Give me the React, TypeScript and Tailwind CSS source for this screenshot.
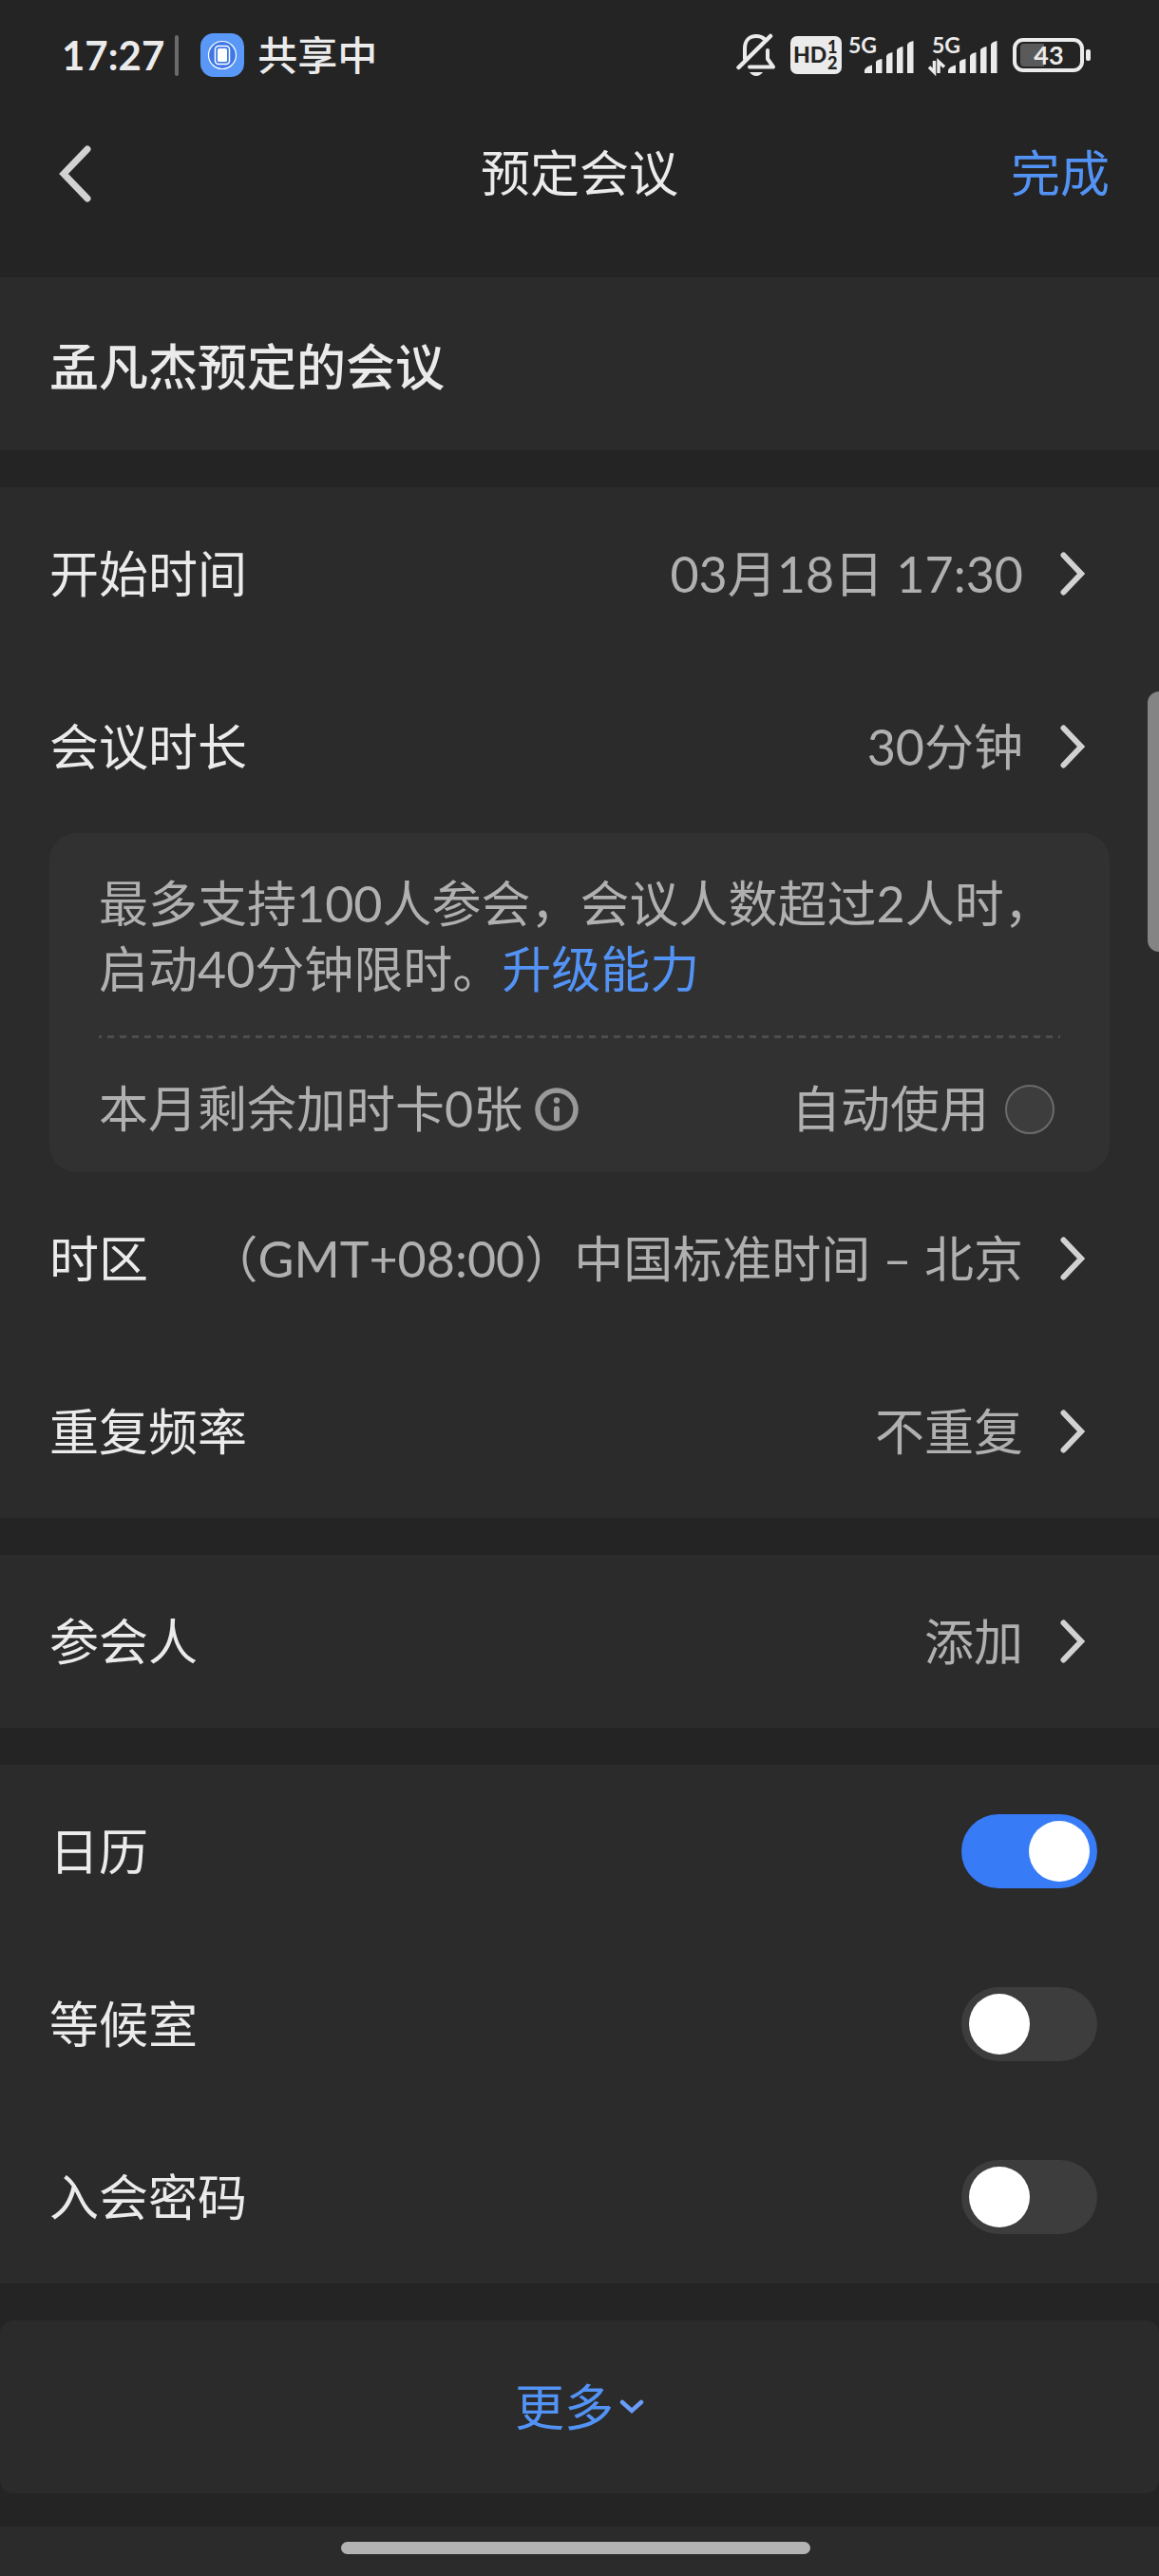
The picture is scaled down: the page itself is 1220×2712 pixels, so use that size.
import { useState } from "react";
import type { ReactNode } from "react";

function ChevronRight() {
  return (
    <svg className="h-[46px] w-[26px] shrink-0" viewBox="0 0 26 46" fill="none" aria-hidden="true">
      <path d="M3.5 3.5 L22 23 L3.5 42.5" stroke="#d2d2d2" strokeWidth="6" strokeLinecap="round" strokeLinejoin="miter" />
    </svg>
  );
}

function SignalBars() {
  return (
    <g fill="#ebebeb">
      <path d="M0 34 V31 Q1 27 8 25.500 V34 Z" />
      <path d="M12 22 Q13 20 18.500 19 V34 H12 Z" />
      <path d="M23 16 Q24 13 29.500 12 V34 H23 Z" />
      <path d="M34 9.500 Q35 7 40.500 6 V34 H34 Z" />
      <path d="M45 4 Q46 1 51.500 0 V34 H45 Z" />
    </g>
  );
}

function StatusBar() {
  return (
    <div className="flex h-[116px] items-center pr-[72px] pl-[65px] text-[42px] leading-[60px] text-[#ebebeb]">
      <span className="font-bold">17:27</span>
      <span className="ml-[11px] h-[43px] w-1 rounded-full bg-[#6b6b6b]" />
      <svg className="ml-[23px] h-[46px] w-[46px]" viewBox="0 0 46 46" fill="none" aria-hidden="true">
        <rect width="46" height="46" rx="14" fill="#5a98f7" />
        <circle cx="23" cy="23" r="14.500" fill="#3f78e6" stroke="#fff" strokeWidth="1.200" />
        <rect x="15.500" y="13.500" width="15" height="19" rx="3.500" stroke="#fff" strokeWidth="1.500" />
        <rect x="18" y="16" width="10" height="14" rx="1.500" fill="#fff" />
      </svg>
      <span className="ml-[14px] font-medium">共享中</span>

      <div className="ml-auto flex items-center">
        <svg className="h-[46px] w-[42px]" viewBox="0 0 42 46" fill="none" stroke="#ebebeb" aria-hidden="true">
          <path d="M9 27 V16 C9 7.500 14 3 21 3 C24.500 3 27.500 4 29.500 6" strokeWidth="4" strokeLinecap="round" />
          <path d="M33 18 V27 L39 35.500 H14" strokeWidth="4" strokeLinecap="round" strokeLinejoin="round" />
          <path d="M2.500 36 L36 3" strokeWidth="4.500" strokeLinecap="round" />
          <path d="M14 41 H28 Q25 45 21 45 Q17 45 14 41 Z" fill="#ebebeb" stroke="none" />
        </svg>
        <svg className="ml-[15px] h-[40px] w-[54px]" viewBox="0 0 54 40" role="img" aria-label="HD 1 2">
          <rect width="54" height="40" rx="7" fill="#ebebeb" />
          <g fill="#242424" className="font-['Lato',sans-serif] font-black">
            <text x="3" y="28" fontSize="23">HD</text>
            <text x="39" y="18" fontSize="18">1</text>
            <text x="39" y="35" fontSize="18">2</text>
          </g>
        </svg>
        <svg className="ml-[7px] h-[50px] w-[69px] overflow-visible" viewBox="0 0 69 50" role="img" aria-label="5G">
          <text x="0" y="23" fontSize="23" fill="#ebebeb" className="font-['Lato',sans-serif] font-bold">5G</text>
          <g transform="translate(17 10)"><SignalBars /></g>
        </svg>
        <svg className="ml-[15px] h-[50px] w-[73px] overflow-visible" viewBox="0 0 73 50" role="img" aria-label="5G">
          <text x="4" y="23" fontSize="23" fill="#ebebeb" className="font-['Lato',sans-serif] font-bold">5G</text>
          <path d="M6.500 31 V43 L1 37.500 M11 44 V32 L17 37.500" stroke="#ebebeb" strokeWidth="3.500" fill="none" />
          <g transform="translate(21 10)"><SignalBars /></g>
        </svg>
        <svg className="ml-[16px] h-[36px] w-[82px]" viewBox="0 0 82 36" role="img" aria-label="43%">
          <rect x="2" y="2" width="71" height="32" rx="9" fill="none" stroke="#ebebeb" strokeWidth="4" />
          <path d="M12 6 H33 V30 H12 Q8 30 8 26 V10 Q8 6 12 6 Z" fill="#5a5a5a" />
          <rect x="77" y="12" width="5" height="12" rx="2" fill="#ebebeb" />
          <text x="38" y="28" fontSize="27" textAnchor="middle" fill="#ebebeb" className="font-['Lato',sans-serif] font-bold">43</text>
        </svg>
      </div>
    </div>
  );
}

function NavRow({ label, value }: { label: string; value: string }) {
  return (
    <button type="button" className="flex h-[182px] w-full items-center pr-[78px] pl-[52px] text-left">
      <span className="text-[#ebebeb]">{label}</span>
      <span className="ml-auto text-[#b0b0b0]">{value}</span>
      <span className="ml-[39px]"><ChevronRight /></span>
    </button>
  );
}

function SwitchRow({ label, initial }: { label: string; initial: boolean }) {
  const [on, setOn] = useState(initial);
  return (
    <label className="flex h-[182px] items-center justify-between pr-[65px] pl-[52px] text-[#ebebeb]">
      {label}
      <input
        type="checkbox"
        role="switch"
        checked={on}
        onChange={() => setOn(!on)}
        className="flex h-[78px] w-[143px] appearance-none items-center rounded-full bg-[#3d3d3d] px-2 before:h-16 before:w-16 before:rounded-full before:bg-white checked:justify-end checked:bg-[#387bf7]"
      />
    </label>
  );
}

function Card({ children }: { children: ReactNode }) {
  return <section className="bg-[#2b2b2b]">{children}</section>;
}

export default function App() {
  const [title, setTitle] = useState("孟凡杰预定的会议");
  const [auto, setAuto] = useState(false);

  return (
    <div className="relative flex min-h-screen flex-col bg-[#242424] text-[52px] leading-[69px] font-['Lato','Noto_Sans_CJK_SC',sans-serif]">
      <StatusBar />

      <header className="grid h-[176px] grid-cols-3 items-start px-[52px] pt-[32px] text-[#ebebeb]">
        <button type="button" aria-label="返回" className="ml-[9px] flex h-[69px] items-center justify-self-start">
          <svg className="h-[60px] w-[36px]" viewBox="0 0 36 60" fill="none" aria-hidden="true">
            <path d="M31 4 L6 30 L31 56" stroke="#d2d2d2" strokeWidth="7" strokeLinecap="round" />
          </svg>
        </button>
        <h1 className="text-center font-normal">预定会议</h1>
        <button type="button" className="justify-self-end text-[#5393f5]">完成</button>
      </header>

      <main className="flex flex-col gap-[39px]">
        <Card>
          <input
            type="text"
            aria-label="会议主题"
            value={title}
            onChange={(e) => setTitle(e.target.value)}
            className="block h-[182px] w-full bg-transparent px-[52px] font-medium text-[#ebebeb] outline-none"
          />
        </Card>

        <Card>
          <NavRow label="开始时间" value="03月18日 17:30" />
          <NavRow label="会议时长" value="30分钟" />
          <div className="mx-[52px] rounded-[28px] bg-[#313131] px-[52px] pt-[40px] pb-[32px] text-[#b0b0b0]">
            <p>
              最多支持100人参会，会议人数超过2人时，
              <br />
              启动40分钟限时。<a href="#upgrade" className="text-[#5393f5]">升级能力</a>
            </p>
            <svg className="mt-[35px] block h-[3px] w-full" aria-hidden="true">
              <line x1="-4" y1="1.500" x2="100%" y2="1.500" stroke="#4d4d4d" strokeWidth="3" strokeDasharray="7 6" />
            </svg>
            <div className="mt-[40px] flex items-center pr-[6px]">
              <span>本月剩余加时卡0张</span>
              <button type="button" aria-label="加时卡说明" className="ml-[13px]">
                <svg className="h-[46px] w-[46px]" viewBox="0 0 46 46" fill="none" aria-hidden="true">
                  <circle cx="23" cy="23" r="20" stroke="#999" strokeWidth="5.500" />
                  <circle cx="23" cy="13.500" r="3.200" fill="#999" />
                  <rect x="20" y="19.500" width="6" height="16.500" rx="3" fill="#999" />
                </svg>
              </button>
              <label className="ml-auto flex items-center gap-[17px]">
                自动使用
                <input
                  type="checkbox"
                  checked={auto}
                  onChange={() => setAuto(!auto)}
                  className="h-[52px] w-[52px] appearance-none rounded-full border-2 border-[#6b6b6b] bg-[#3d3d3d] checked:bg-[#387bf7]"
                />
              </label>
            </div>
          </div>
          <NavRow label="时区" value="（GMT+08:00）中国标准时间 – 北京" />
          <NavRow label="重复频率" value="不重复" />
        </Card>

        <Card>
          <NavRow label="参会人" value="添加" />
        </Card>

        <Card>
          <SwitchRow label="日历" initial={true} />
          <SwitchRow label="等候室" initial={false} />
          <SwitchRow label="入会密码" initial={false} />
        </Card>

        <button type="button" className="flex h-[182px] w-full items-center justify-center gap-[6px] rounded-[14px] bg-[#2b2b2b] text-[#5393f5]">
          更多
          <svg className="h-[16px] w-[26px]" viewBox="0 0 26 16" fill="none" aria-hidden="true">
            <path d="M3 3 L13 12 L23 3" stroke="#6a9df8" strokeWidth="4.500" strokeLinecap="round" />
          </svg>
        </button>
      </main>

      <footer className="mt-[35px] flex min-h-[52px] flex-1 justify-center bg-[#2b2b2b] pt-[16px] pr-[8px]">
        <div className="h-[13px] w-[494px] rounded-full bg-[#b3b3b3]" />
      </footer>

      <div className="absolute top-[728px] right-0 h-[274px] w-[12px] rounded-l-[12px] bg-[#848484]" />
    </div>
  );
}
